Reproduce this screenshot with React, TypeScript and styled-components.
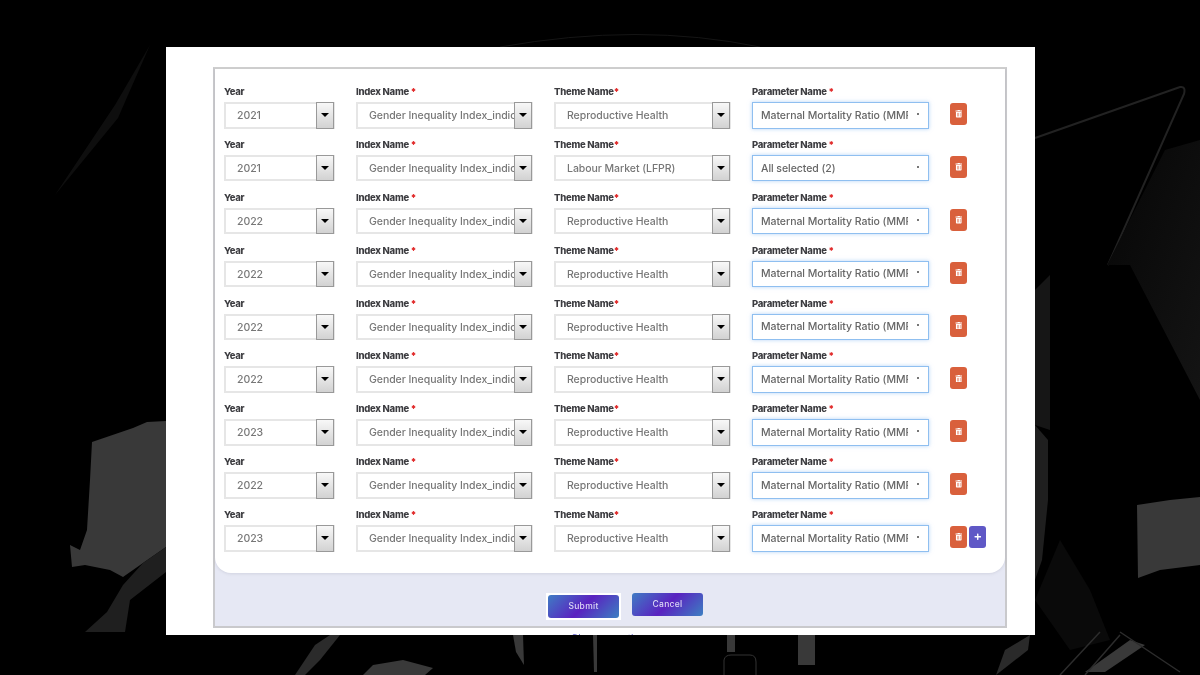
import React, { FC } from 'react';
import styled, { createGlobalStyle } from 'styled-components';
import { FaPlus, FaTrashAlt } from 'react-icons/fa';

type RowType = {
  year: string;
  theme: string;
  parameter: string;
};

const MMR = 'Maternal Mortality Ratio (MMR)';
const HEALTH = 'Reproductive Health';

const rows: RowType[] = [
  { year: '2021', theme: HEALTH, parameter: MMR },
  { year: '2021', theme: 'Labour Market (LFPR)', parameter: 'All selected (2)' },
  { year: '2022', theme: HEALTH, parameter: MMR },
  { year: '2022', theme: HEALTH, parameter: MMR },
  { year: '2022', theme: HEALTH, parameter: MMR },
  { year: '2022', theme: HEALTH, parameter: MMR },
  { year: '2023', theme: HEALTH, parameter: MMR },
  { year: '2022', theme: HEALTH, parameter: MMR },
  { year: '2023', theme: HEALTH, parameter: MMR },
];

const Backdrop: FC = () => (
  <BackdropSvg viewBox="0 0 1200 675" preserveAspectRatio="none">
    <defs>
      <radialGradient id="topGlow" cx="50%" cy="0%" r="50%">
        <stop offset="0%" stopColor="#191919" />
        <stop offset="70%" stopColor="#0d0d0d" />
        <stop offset="100%" stopColor="#000" />
      </radialGradient>
      <linearGradient id="sideFade" x1="0" y1="0" x2="1" y2="1">
        <stop offset="0%" stopColor="#060606" />
        <stop offset="100%" stopColor="#141414" />
      </linearGradient>
    </defs>
    <rect width="1200" height="675" fill="#000" />
    <ellipse cx="600" cy="0" rx="520" ry="110" fill="url(#topGlow)" />
    <path d="M55 195 L115 105 L150 45 L128 95 L118 118 Z" fill="#0e0e0e" />
    <path d="M1035 138 L1180 87 Q1186 86 1184 94 L1108 265" fill="none" stroke="#222" strokeWidth="2" />
    <path d="M1107 265 L1165 150 L1200 140 L1200 400 L1130 265 Z" fill="url(#sideFade)" />
    <path d="M1035 290 L1050 275 L1050 430 L1035 425 Z" fill="#161616" />
    <path d="M92 442 L133 428 L147 422 L166 421 L166 547 L143 563 L123 577 L110 570 L85 565 L72 567 L70 545 L80 550 L87 530 L90 480 Z" fill="#393939" />
    <path d="M166 547 L143 563 L123 585 L107 612 L85 632 L125 632 L130 600 L166 572 Z" fill="#1f1f1f" />
    <path d="M1137 505 L1170 500 L1200 497 L1200 565 L1160 570 L1138 578 Z" fill="#393939" />
    <path d="M1035 425 L1048 440 L1048 500 L1042 560 L1035 580 Z" fill="#1f1f1f" />
    <path d="M1035 600 L1060 540 L1090 590 L1110 640 L1070 650 Z" fill="#0a0a0a" />
    <path d="M1130 640 L1145 645 L1105 672 L1085 672 Z" fill="#393939" />
    <path d="M1060 675 L1100 632 M1085 675 L1120 635 M1120 632 L1180 672" fill="none" stroke="#2c2c2c" strokeWidth="1.5" />
    <path d="M996 675 L1005 650 L1030 635 L1028 650 L1005 668 Z" fill="#2a2a2a" />
    <path d="M295 675 L315 645 L330 635 L340 635 L320 660 L305 675 Z" fill="#2b2b2b" />
    <path d="M363 675 L373 665 L403 660 L433 668 L425 675 Z" fill="#393939" />
    <path d="M513 635 L523 635 L524 665 L516 652 Z" fill="#393939" />
    <path d="M593 635 L597 635 L597 672 L594 672 Z" fill="#393939" />
    <path d="M727 635 L735 635 L735 652 L727 652 Z" fill="#393939" />
    <path d="M798 635 L815 635 L815 665 L798 665 Z" fill="#393939" />
    <path d="M724 675 L724 660 Q725 655 731 655 L750 655 Q756 655 756 662 L756 675" fill="none" stroke="#333" />
    <path d="M500 47 Q640 22 760 47" fill="none" stroke="#151515" />
  </BackdropSvg>
);

const App: FC = () => (
  <Root>
    <GlobalStyle />
    <Backdrop />
    <Modal>
      <Panel>
        <Rows>
          {rows.map((row, index) => (
            <Row key={index}>
              <Field>
                <Label>Year</Label>
                <Select>
                  <Value>{row.year}</Value>
                  <ArrowButton />
                </Select>
              </Field>
              <Field>
                <Label>
                  Index Name <Required>*</Required>
                </Label>
                <Select>
                  <Value>Gender Inequality Index_indicator</Value>
                  <ArrowButton />
                </Select>
              </Field>
              <Field>
                <Label>
                  Theme Name<Required>*</Required>
                </Label>
                <Select>
                  <Value>{row.theme}</Value>
                  <ArrowButton />
                </Select>
              </Field>
              <Field>
                <Label>
                  Parameter Name <Required>*</Required>
                </Label>
                <MultiSelect>
                  <MultiValue>{row.parameter}</MultiValue>
                  <Caret />
                </MultiSelect>
              </Field>
              <Actions>
                <IconButton $color="#d9603c" aria-label="delete">
                  <FaTrashAlt />
                </IconButton>
                {index === rows.length - 1 && (
                  <IconButton $color="#5f58c6" aria-label="add">
                    <FaPlus />
                  </IconButton>
                )}
              </Actions>
            </Row>
          ))}
        </Rows>
        <Buttons>
          <SubmitWrap>
            <GradientButton>Submit</GradientButton>
          </SubmitWrap>
          <GradientButton>Cancel</GradientButton>
        </Buttons>
      </Panel>
      <FooterLink>Choose another</FooterLink>
    </Modal>
  </Root>
);

export default App;

const GlobalStyle = createGlobalStyle`
  html, body {
    margin: 0;
    padding: 0;
    background: #000;
  }
  * {
    box-sizing: border-box;
  }
`;

const Root = styled.div`
  position: relative;
  width: 1200px;
  height: 675px;
  padding: 47px 165px 40px 166px;
  overflow: hidden;
  font-family: 'Inter', 'Open Sans', sans-serif;
`;

const BackdropSvg = styled.svg`
  position: absolute;
  inset: 0;
  width: 100%;
  height: 100%;
`;

const Modal = styled.div`
  position: relative;
  height: 588px;
  padding: 20px 28px 0 47px;
  background: #fff;
  overflow: hidden;
  filter: blur(0.4px);
`;

const Panel = styled.div`
  height: 561px;
  border: 2px solid #c9c9cc;
  border-top-color: #cfcfcf;
  background: #e6e8f4;
`;

const Rows = styled.div`
  height: 504px;
  padding: 17px 0 0 9px;
  display: flex;
  flex-direction: column;
  gap: 10.4px;
  background: #fff;
  border-radius: 0 0 16px 16px;
  box-shadow: 0 1px 3px rgba(120, 120, 140, 0.18);
`;

const Row = styled.div`
  display: grid;
  grid-template-columns: 111px 177px 177px 177px auto;
  column-gap: 21px;
  height: 42.5px;
`;

const Field = styled.div`
  display: flex;
  flex-direction: column;
  min-width: 0;
`;

const Label = styled.div`
  height: 16px;
  font-size: 9.5px;
  line-height: 12px;
  font-weight: 800;
  letter-spacing: -0.25px;
  color: #3c3c40;
  white-space: nowrap;
`;

const Required = styled.span`
  color: #e02424;
`;

const Select = styled.div`
  display: flex;
  align-items: stretch;
  height: 26.5px;
  border: 2px solid #e6e6e6;
  background: #fff;
`;

const Value = styled.div`
  flex: 1;
  min-width: 0;
  padding-left: 11px;
  font-size: 10.5px;
  font-weight: 500;
  letter-spacing: -0.05px;
  line-height: 24px;
  color: #777;
  white-space: nowrap;
  overflow: hidden;
`;

const ArrowButton = styled.div`
  position: relative;
  flex: none;
  width: 18px;
  margin: -2px -1px -2px 0;
  border: 1.5px solid #999;
  background: linear-gradient(#f8f8f8, #d2d2d2);

  &::after {
    content: '';
    position: absolute;
    top: 10px;
    left: 3.5px;
    border-left: 4px solid transparent;
    border-right: 4px solid transparent;
    border-top: 4px solid #000;
  }
`;

const MultiSelect = styled.div`
  display: flex;
  align-items: center;
  height: 26.5px;
  padding: 0 9px 0 8px;
  border: 1.5px solid #8fbff0;
  background: #fff;
  box-shadow: 0 0 4px rgba(120, 175, 240, 0.55);
`;

const MultiValue = styled.div`
  flex: 1;
  min-width: 0;
  margin-right: 9px;
  font-size: 10.5px;
  font-weight: 500;
  letter-spacing: -0.05px;
  color: #666;
  white-space: nowrap;
  overflow: hidden;
`;

const Caret = styled.span`
  flex: none;
  width: 2px;
  height: 2px;
  margin-bottom: 3px;
  background: #777;
`;

const Actions = styled.div`
  display: flex;
  gap: 2px;
  padding-top: 17px;
`;

const IconButton = styled.button<{ $color: string }>`
  display: flex;
  align-items: center;
  justify-content: center;
  width: 17px;
  height: 22px;
  padding: 0;
  border: none;
  border-radius: 3px;
  background: ${({ $color }) => $color};
  color: #fff;
  font-size: 7.5px;
`;

const Buttons = styled.div`
  display: flex;
  align-items: flex-start;
  gap: 11px;
  padding: 20px 0 0 331px;
`;

const SubmitWrap = styled.div`
  padding: 2px;
  background: #fff;
`;

const GradientButton = styled.button`
  display: block;
  width: 71px;
  height: 22.5px;
  padding: 0;
  border: none;
  border-radius: 3px;
  background: linear-gradient(135deg, #3f7cc4 0%, #5a22c0 50%, #3c80c2 100%);
  color: #ddd8f5;
  font-family: 'Inter', sans-serif;
  font-size: 8.5px;
  font-weight: 500;
  letter-spacing: 0.3px;
`;

const FooterLink = styled.div`
  margin: 4px 0 0 358px;
  font-size: 10px;
  line-height: 12px;
  color: #5a5ac8;
  white-space: nowrap;
`;
